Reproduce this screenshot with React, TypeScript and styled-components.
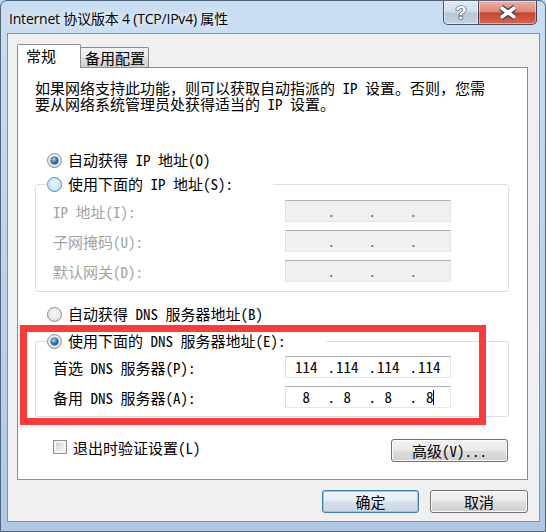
import { Fragment } from 'react';
import styled, { createGlobalStyle, css } from 'styled-components';

const SONG = `"Noto Sans Mono CJK SC", "Noto Sans CJK SC", monospace`;
const UI = `"Open Sans", "Noto Sans CJK SC", sans-serif`;

type RadioState = 'checked' | 'hover' | 'off';

function Radio({ state, children }: { state: RadioState; children: string }) {
  return (
    <RadioRow>
      <RadioDot $state={state} />
      <span>{children}</span>
    </RadioRow>
  );
}

interface IpFieldProps {
  parts?: string[];
  disabled?: boolean;
  caret?: boolean;
}

// windows ip control: four small edits with the dot hugging the next part
function IpField({ parts, disabled, caret }: IpFieldProps) {
  return (
    <Field $disabled={!!disabled}>
      {[0, 1, 2, 3].map((i) => (
        <Fragment key={i}>
          {i > 0 && <Dot $disabled={!!disabled}>.</Dot>}
          <Seg>
            {parts?.[i]}
            {caret && i === 3 && <Caret />}
          </Seg>
        </Fragment>
      ))}
    </Field>
  );
}

export default function App() {
  return (
    <Window>
      <GlobalStyle />
      <TitleBar>
        <Title>Internet 协议版本 4 (TCP/IPv4) 属性</Title>
        <Caption>
          <HelpButton>?</HelpButton>
          <CloseButton>
            <svg width="24" height="15" viewBox="0 0 24 15">
              <path d="M5 2.5 L19 12.5 M19 2.5 L5 12.5" stroke="#3b3f45" strokeWidth="6.2" />
              <path d="M5 2.5 L19 12.5 M19 2.5 L5 12.5" stroke="#ffffff" strokeWidth="3.6" />
            </svg>
          </CloseButton>
        </Caption>
      </TitleBar>

      <Client>
        <TabRow>
          <Tab $active>常规</Tab>
          <Tab>备用配置</Tab>
        </TabRow>

        <Panel>
          <Intro>
            如果网络支持此功能，则可以获取自动指派的 IP 设置。否则，您需
            <br />
            要从网络系统管理员处获得适当的 IP 设置。
          </Intro>

          <StandaloneRadio $mt={40}>
            <Radio state="checked">自动获得 IP 地址(O)</Radio>
          </StandaloneRadio>

          <Group $mt={8} $pad="8px 0 9px 0">
            <Legend>
              <Radio state="hover">使用下面的 IP 地址(S):</Radio>
            </Legend>
            <Rows>
              <Label $disabled>IP 地址(I):</Label>
              <IpField disabled />
              <Label $disabled>子网掩码(U):</Label>
              <IpField disabled />
              <Label $disabled>默认网关(D):</Label>
              <IpField disabled />
            </Rows>
          </Group>

          <StandaloneRadio $mt={14}>
            <Radio state="off">自动获得 DNS 服务器地址(B)</Radio>
          </StandaloneRadio>

          <Group $mt={11} $pad="7px 0 8px 0">
            <Legend>
              <Radio state="checked">使用下面的 DNS 服务器地址(E):</Radio>
            </Legend>
            <Rows>
              <Label>首选 DNS 服务器(P):</Label>
              <IpField parts={['114', '114', '114', '114']} />
              <Label>备用 DNS 服务器(A):</Label>
              <IpField parts={['8', '8', '8', '8']} caret />
            </Rows>
          </Group>

          <Footer>
            <CheckRow>
              <CheckBox />
              <span>退出时验证设置(L)</span>
            </CheckRow>
            <Button $w={117}>高级(V)...</Button>
          </Footer>
        </Panel>

        <DialogButtons>
          <Button $w={97} $default>
            确定
          </Button>
          <Button $w={98}>取消</Button>
        </DialogButtons>
      </Client>

      <Highlight />
    </Window>
  );
}

const GlobalStyle = createGlobalStyle`
  html, body {
    margin: 0;
    padding: 0;
  }
  body {
    width: 546px;
    height: 532px;
    overflow: hidden;
    background: #bcd3ec;
  }
  * {
    box-sizing: border-box;
  }
`;

const Window = styled.div`
  position: relative;
  width: 546px;
  height: 532px;
  display: flex;
  flex-direction: column;
  border: 1px solid #51657e;
  border-radius: 7px 7px 0 0;
  background: linear-gradient(180deg, #cadef2 0%, #bfd6ee 35%, #b7cfe9 70%, #aec8e5 100%);
  font-family: ${SONG};
  font-size: 15px;
  color: #000;
  overflow: hidden;
`;

const TitleBar = styled.div`
  height: 32px;
  flex: none;
  display: flex;
  justify-content: space-between;
  align-items: flex-start;
  padding-left: 8px;
`;

const Title = styled.div`
  font-family: ${UI};
  font-size: 14px;
  letter-spacing: -0.2px;
  line-height: 20px;
  padding-top: 8px;
  color: #000;
  white-space: nowrap;
  text-shadow: 0 0 6px rgba(255, 255, 255, 0.9), 0 0 10px rgba(255, 255, 255, 0.7);
`;

const Caption = styled.div`
  display: flex;
  margin-right: 8px;
`;

const capBase = css`
  height: 24px;
  display: flex;
  align-items: center;
  justify-content: center;
  border: 1px solid rgba(38, 52, 72, 0.8);
  border-top: none;
  box-shadow: inset 0 0 0 1px rgba(255, 255, 255, 0.45);
`;

const HelpButton = styled.div`
  ${capBase};
  width: 35px;
  border-right: none;
  border-radius: 0 0 0 5px;
  background: linear-gradient(180deg, #e4ecf5 0%, #d0dce9 48%, #b6c7da 52%, #c3d3e4 100%);
  font-family: 'Liberation Sans', sans-serif;
  font-weight: 700;
  font-size: 19px;
  color: #fff;
  -webkit-text-stroke: 1.2px #3d4756;
  paint-order: stroke fill;
`;

const CloseButton = styled.div`
  ${capBase};
  width: 59px;
  border-radius: 0 0 5px 0;
  background: linear-gradient(180deg, #eab0a2 0%, #dc8a78 46%, #c8452e 52%, #d6654f 100%);
`;

const Client = styled.div`
  flex: 1;
  display: flex;
  flex-direction: column;
  margin: 0 5px 9px 6px;
  border: 1px solid #7f93ab;
  background: #f0f0f0;
  padding: 10px 11px 8px 9px;
`;

const TabRow = styled.div`
  display: flex;
  align-items: flex-start;
  height: 24px;
  margin-bottom: -1px;
  position: relative;
  z-index: 1;
`;

const Tab = styled.div<{ $active?: boolean }>`
  border: 1px solid #898c95;
  border-bottom: none;
  border-radius: 2px 2px 0 0;
  white-space: nowrap;
  ${(p) =>
    p.$active
      ? css`
          width: 64px;
          height: 24px;
          line-height: 21px;
          padding-left: 8px;
          background: #fff;
        `
      : css`
          width: 69px;
          height: 20px;
          margin-top: 3px;
          margin-left: -1px;
          line-height: 19px;
          padding-left: 4px;
          background: linear-gradient(180deg, #f3f3f3 0%, #ebebeb 45%, #dddddd 55%, #cfcfcf 100%);
        `}
`;

const Panel = styled.div`
  flex: 1;
  display: flex;
  flex-direction: column;
  border: 1px solid #898c95;
  background: #fff;
  padding: 12px 18px 0 17px;
`;

const Intro = styled.p`
  margin: 0;
  line-height: 16px;
  white-space: nowrap;
`;

const StandaloneRadio = styled.div<{ $mt: number }>`
  margin-top: ${(p) => p.$mt}px;
  padding-left: 12px;
`;

const RadioRow = styled.div`
  display: flex;
  align-items: center;
  gap: 6px;
  height: 16px;
  line-height: 16px;
  white-space: nowrap;
`;

const RadioDot = styled.span<{ $state: RadioState }>`
  position: relative;
  width: 15px;
  height: 15px;
  flex: none;
  border-radius: 50%;
  ${(p) =>
    p.$state === 'hover'
      ? css`
          border: 1px solid #4b8fc4;
          background: radial-gradient(circle at 50% 45%, #eef8fe 0%, #cbe9fb 55%, #9fd3f3 100%);
        `
      : css`
          border: 1px solid #8a8c8f;
          background: radial-gradient(circle at 50% 40%, #fbfbfb 0%, #e6e6e6 60%, #cdcdcd 100%);
        `}
  ${(p) =>
    p.$state === 'checked' &&
    css`
      &::after {
        content: '';
        position: absolute;
        left: 3px;
        top: 3px;
        width: 7px;
        height: 7px;
        border-radius: 50%;
        background: radial-gradient(circle at 40% 35%, #bfe6ff 0%, #3d8fd6 35%, #124c86 75%, #0b2f57 100%);
        box-shadow: 0 0 0 0.5px #1a3550;
      }
    `}
`;

const Group = styled.fieldset<{ $mt: number; $pad: string }>`
  margin: ${(p) => p.$mt}px 0 0 0;
  padding: ${(p) => p.$pad};
  border: 1px solid #d5dfe5;
  border-radius: 3px;
  min-width: 0;
`;

const Legend = styled.legend`
  margin-left: 11px;
  padding: 0 40px 0 0;
`;

const Rows = styled.div`
  display: grid;
  grid-template-columns: 232px 166px;
  row-gap: 8px;
  align-items: center;
  padding-left: 17px;
`;

const Label = styled.span<{ $disabled?: boolean }>`
  color: ${(p) => (p.$disabled ? '#a3a3a3' : '#000')};
  white-space: nowrap;
`;

const Field = styled.div<{ $disabled: boolean }>`
  width: 166px;
  height: 22px;
  display: flex;
  align-items: center;
  padding-left: 8px;
  border: 1px solid;
  border-color: #abadb3 #e2e3ea #e3e9ef #dbdfe6;
  background: ${(p) => (p.$disabled ? '#f0f0f0' : '#fff')};
  line-height: 20px;
`;

const Seg = styled.span`
  flex: none;
  width: 33.5px;
  padding-right: 9px;
  text-align: center;
  white-space: nowrap;
`;

const Dot = styled.span<{ $disabled: boolean }>`
  flex: none;
  width: 7.5px;
  text-align: center;
  color: ${(p) => (p.$disabled ? '#6d6d6d' : '#000')};
`;

const Caret = styled.span`
  display: inline-block;
  width: 1px;
  height: 15px;
  margin-left: -1px;
  margin-right: -1px;
  background: #000;
  vertical-align: -2px;
`;

const Footer = styled.div`
  display: flex;
  justify-content: space-between;
  align-items: flex-start;
  margin-top: 22px;
  padding: 0 1px 0 18px;
`;

const CheckRow = styled.label`
  display: flex;
  align-items: center;
  gap: 6px;
  height: 16px;
  white-space: nowrap;
`;

const CheckBox = styled.span`
  position: relative;
  width: 14px;
  height: 14px;
  border: 1px solid #8e8f8f;
  background: #f5f5f5;
  &::after {
    content: '';
    position: absolute;
    inset: 2px;
    background: linear-gradient(135deg, #cbcfd5 0%, #e4e6e8 55%, #f7f7f7 100%);
  }
`;

const Button = styled.button<{ $w: number; $default?: boolean }>`
  width: ${(p) => p.$w}px;
  height: 23px;
  padding: 0;
  font-family: ${SONG};
  font-size: 15px;
  color: #000;
  border-radius: 3px;
  border: 1px solid #707070;
  background: linear-gradient(180deg, #f2f2f2 0%, #ebebeb 48%, #dddddd 52%, #cfcfcf 100%);
  box-shadow: inset 0 0 0 1px #fbfbfb;
  ${(p) =>
    p.$default &&
    css`
      border-color: #3c7fb1;
      background: linear-gradient(180deg, #eef4f9 0%, #e6edf3 48%, #d6e0ea 52%, #cbd7e2 100%);
      box-shadow: inset 0 0 0 1px #7fd0f5;
    `}
`;

const DialogButtons = styled.div`
  display: flex;
  justify-content: flex-end;
  gap: 11px;
  margin-top: 10px;
`;

const Highlight = styled.div`
  position: absolute;
  left: 19px;
  top: 324px;
  width: 466px;
  height: 100px;
  border: 7px solid #fb3a3a;
  pointer-events: none;
`;
